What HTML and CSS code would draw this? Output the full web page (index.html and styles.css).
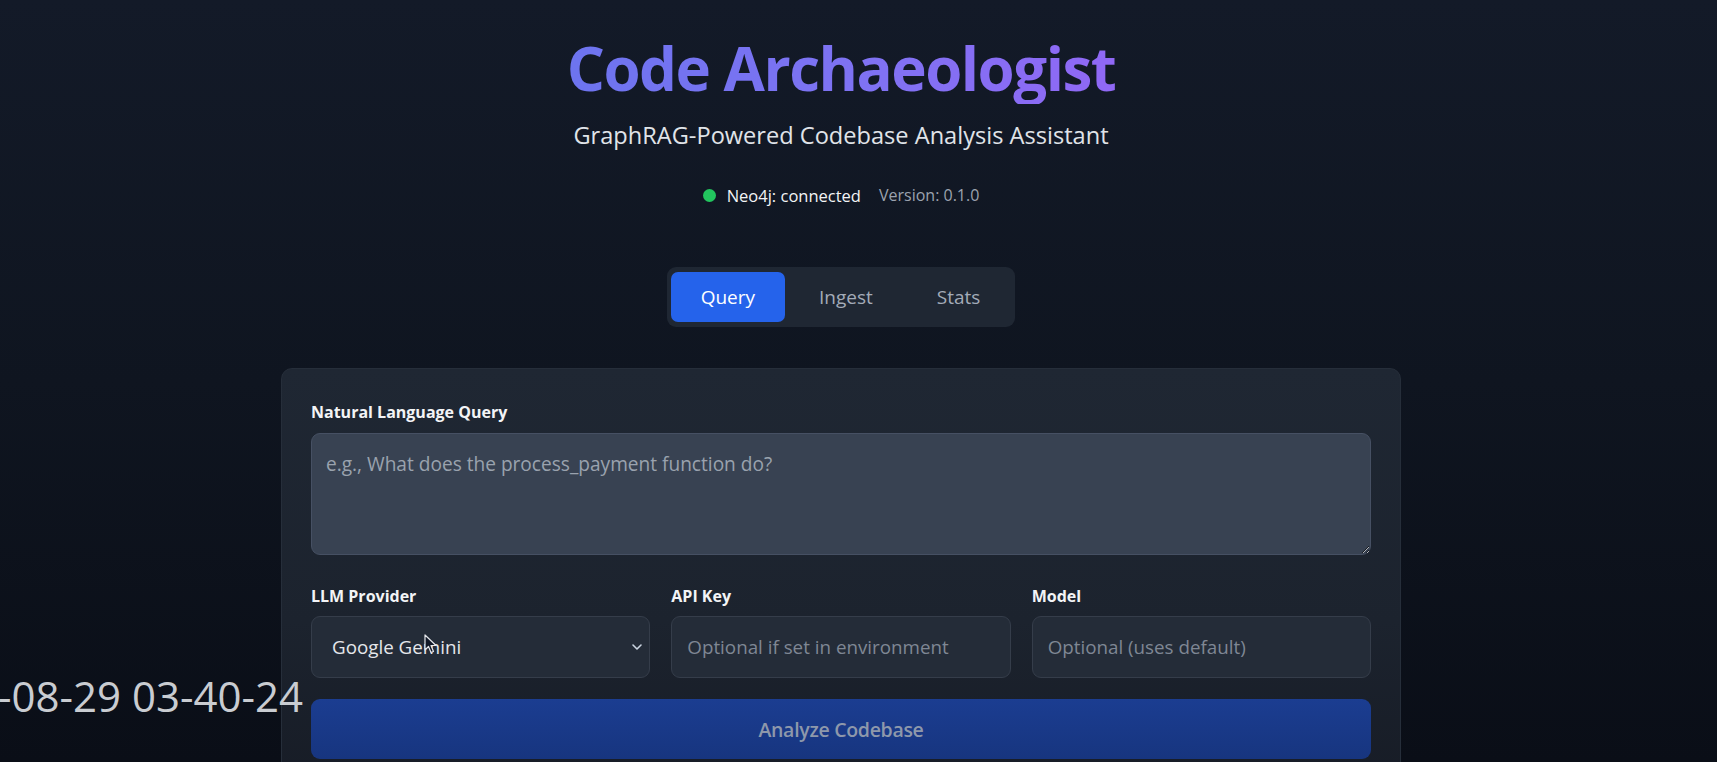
FILE: index.html
```html
<!DOCTYPE html>
<html lang="en">
<head>
<meta charset="utf-8">
<title>Code Archaeologist</title>
<link rel="stylesheet" href="styles.css">
</head>
<body>
<div class="page">
  <header class="header">
    <h1 class="title">Code Archaeologist</h1>
    <p class="subtitle">GraphRAG-Powered Codebase Analysis Assistant</p>
    <div class="status">
      <span class="dot"></span>
      <span class="status-text">Neo4j: connected</span>
      <span class="version">Version: 0.1.0</span>
    </div>
  </header>

  <nav class="tabs">
    <button class="tab active">Query</button>
    <button class="tab">Ingest</button>
    <button class="tab">Stats</button>
  </nav>

  <section class="card">
    <label class="label">Natural Language Query</label>
    <textarea class="query" rows="3" placeholder="e.g., What does the process_payment function do?"></textarea>

    <div class="row">
      <div class="field">
        <label class="label small">LLM Provider</label>
        <div class="select-wrap">
          <select class="control select">
            <option>Google Gemini</option>
          </select>
          <svg class="chevron" width="12" height="8" viewBox="0 0 12 8"><path d="M2 2 L6 6 L10 2" fill="none" stroke="#cbd5e1" stroke-width="1.6" stroke-linecap="round" stroke-linejoin="round"/></svg>
        </div>
      </div>
      <div class="field">
        <label class="label small">API Key</label>
        <input class="control" type="text" placeholder="Optional if set in environment">
      </div>
      <div class="field">
        <label class="label small">Model</label>
        <input class="control" type="text" placeholder="Optional (uses default)">
      </div>
    </div>

    <button class="analyze">Analyze Codebase</button>
  </section>
</div>

<div class="timestamp">-08-29 03-40-24</div>
<svg class="cursor" width="14" height="21" viewBox="0 0 14 21"><path d="M1 1 L1 16 L4.5 12.5 L7 18.5 L9.5 17.5 L7 11.5 L12 11.5 Z" fill="#111827" stroke="#e5e7eb" stroke-width="1.2" stroke-linejoin="round"/></svg>
</body>
</html>
```

FILE: styles.css
```css
* { box-sizing: border-box; }

html, body {
  margin: 0;
  height: 100%;
}

body {
  background: linear-gradient(180deg, #131a28 0%, #0f1520 50%, #0a0e17 100%);
  font-family: "Open Sans", "Noto Sans", sans-serif;
  color: #e5e7eb;
  overflow: hidden;
  position: relative;
}

.page {
  padding-right: 35px;
  display: flex;
  flex-direction: column;
  align-items: center;
}

.header {
  display: flex;
  flex-direction: column;
  align-items: center;
  padding-top: 32px;
}

.title {
  margin: 0;
  font-size: 60px;
  line-height: 72px;
  font-weight: 700;
  letter-spacing: -1.5px;
  background: linear-gradient(90deg, #6d74ef 0%, #7f72f3 55%, #9068f5 100%);
  -webkit-background-clip: text;
  background-clip: text;
  color: transparent;
}

.subtitle {
  margin: 16px 0 0;
  font-size: 23.6px;
  line-height: 30px;
  color: #e0e4e9;
}

.status {
  margin-top: 33px;
  display: flex;
  align-items: center;
  height: 24px;
}

.dot {
  width: 13px;
  height: 13px;
  border-radius: 50%;
  background: #22c55e;
  margin-right: 11px;
}

.status-text {
  font-size: 16.5px;
  color: #f3f4f6;
  font-weight: 500;
}

.version {
  margin-left: 18px;
  font-size: 16px;
  color: #9ca3af;
}

.tabs {
  margin-top: 60px;
  display: flex;
  gap: 4px;
  padding: 5px 5px 5px 4px;
  background: #1f2733;
  border-radius: 9px;
}

.tab {
  font-family: inherit;
  border: 0;
  background: transparent;
  color: #a3abb8;
  font-size: 19px;
  line-height: 30px;
  padding: 10px 30px;
  border-radius: 7px;
  cursor: pointer;
}

.tab.active {
  background: #2563eb;
  color: #ffffff;
}

.card {
  margin-top: 41px;
  width: 1120px;
  padding: 31px 29px 30px;
  border-radius: 11px;
  background: linear-gradient(180deg, #1f2733 0%, #1c232e 60%, #171c26 100%);
  border: 1px solid #262e3a;
  display: flex;
  flex-direction: column;
}

.label {
  display: block;
  font-size: 16px;
  line-height: 24px;
  font-weight: 700;
  color: #f3f4f6;
  margin-bottom: 9px;
}

.label.small {
  margin-bottom: 8px;
}

.query {
  width: 100%;
  resize: vertical;
  font-family: inherit;
  font-size: 19.1px;
  line-height: 30px;
  padding: 15px 14px;
  background: #384252;
  border: 1px solid #465063;
  border-radius: 9px;
  color: #e5e7eb;
  outline: none;
}

.query::placeholder {
  color: #9aa2ae;
}

.row {
  margin-top: 29px;
  display: grid;
  grid-template-columns: repeat(3, 1fr);
  gap: 21px;
}

.field {
  display: flex;
  flex-direction: column;
}

.control {
  width: 100%;
  height: 62px;
  font-family: inherit;
  font-size: 18.8px;
  line-height: 30px;
  padding: 15px 15px;
  background: #242c38;
  border: 1px solid #353d4a;
  border-radius: 9px;
  color: #e5e7eb;
  outline: none;
}

.control::placeholder {
  color: #7f8794;
}

.select-wrap {
  position: relative;
}

.select {
  appearance: none;
  -webkit-appearance: none;
  padding-left: 20px;
  color: #e5e7eb;
}

.chevron {
  position: absolute;
  right: 7px;
  top: 27px;
  pointer-events: none;
}

.analyze {
  margin-top: 21px;
  height: 60px;
  width: 100%;
  border: 0;
  border-radius: 9px;
  background: linear-gradient(180deg, #1b3d91 0%, #17357f 100%);
  color: #8e98ab;
  font-family: inherit;
  font-size: 19.5px;
  font-weight: 600;
  letter-spacing: -0.3px;
}

.timestamp {
  position: absolute;
  left: -2px;
  top: 667px;
  font-family: "Open Sans", "Noto Sans", sans-serif;
  font-size: 42px;
  line-height: 58px;
  font-weight: 400;
  color: #c9ccd1;
  white-space: nowrap;
}

.cursor {
  position: absolute;
  left: 424px;
  top: 634px;
}
```
